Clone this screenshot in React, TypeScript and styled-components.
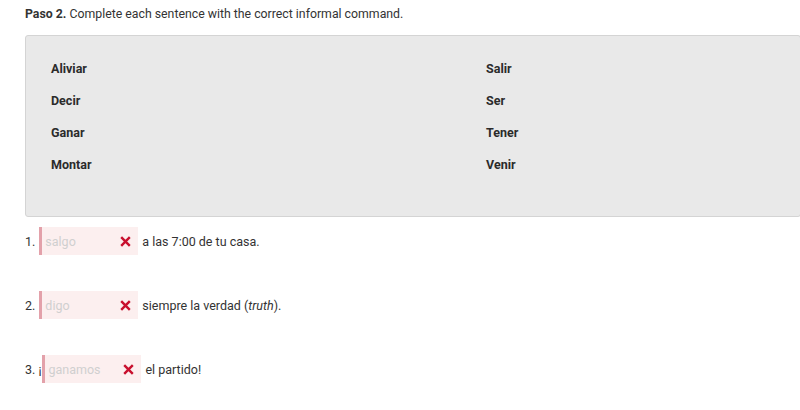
import React from "react";
import styled, { createGlobalStyle } from "styled-components";

const Global = createGlobalStyle`
  html, body { margin: 0; padding: 0; background: #fff; overflow: hidden; }
  body { font-family: Roboto, "Liberation Sans", Arial, sans-serif; color: #333; }
`;

const Page = styled.div`
  padding: 6px 0 0 25px;
  width: 800px;
  box-sizing: border-box;
`;

const Title = styled.p`
  margin: 0;
  font-size: 12.3px;
  line-height: 16px;
  color: #333;
  b { font-weight: 700; }
`;

const WordBank = styled.div`
  margin-top: 13px;
  width: 776px;
  box-sizing: border-box;
  background: #e9e9e9;
  border: 1px solid #d4d4d4;
  border-radius: 3px;
  padding: 25px 0 43px 25px;
  display: grid;
  grid-template-columns: 435px auto;
  row-gap: 16px;
`;

const Word = styled.div`
  font-size: 12.5px;
  line-height: 16px;
  font-weight: 700;
  color: #2b2b2b;
`;

const Items = styled.div`
  margin-top: 10px;
  display: flex;
  flex-direction: column;
  gap: 36px;
`;

const Item = styled.div`
  display: flex;
  align-items: center;
  height: 28px;
  font-size: 12.5px;
  color: #333;
`;

const Num = styled.span<{ $gap: number }>`
  margin-right: ${(p) => p.$gap}px;
`;

const Answer = styled.div`
  display: flex;
  align-items: center;
  width: 99px;
  height: 28px;
  box-sizing: border-box;
  background: #fcefef;
  border-left: 3px solid #e3a1aa;
  padding: 0 6px 0 3px;
  margin-right: 4px;
`;

const Given = styled.span`
  flex: 1;
  color: #d0cfcf;
  font-size: 12.5px;
`;

const Cross = styled.svg`
  width: 11px;
  height: 11px;
  margin-right: 1px;
`;

const XIcon = () => (
  <Cross viewBox="0 0 11 11">
    <path d="M1.2 1.2 L9.8 9.8 M9.8 1.2 L1.2 9.8" stroke="#c8102e" strokeWidth="2.4" strokeLinecap="butt" />
  </Cross>
);

const words = ["Aliviar", "Salir", "Decir", "Ser", "Ganar", "Tener", "Montar", "Venir"];

export default function App() {
  return (
    <Page>
      <Global />
      <Title>
        <b>Paso 2.</b> Complete each sentence with the correct informal command.
      </Title>
      <WordBank>
        {words.map((w) => (
          <Word key={w}>{w}</Word>
        ))}
      </WordBank>
      <Items>
        <Item>
          <Num $gap={4}>1.</Num>
          <Answer>
            <Given>salgo</Given>
            <XIcon />
          </Answer>
          <span>a las 7:00 de tu casa.</span>
        </Item>
        <Item>
          <Num $gap={4}>2.</Num>
          <Answer>
            <Given>digo</Given>
            <XIcon />
          </Answer>
          <span>
            siempre la verdad (<i>truth</i>).
          </span>
        </Item>
        <Item>
          <Num $gap={1}>3. ¡</Num>
          <Answer>
            <Given>ganamos</Given>
            <XIcon />
          </Answer>
          <span>el partido!</span>
        </Item>
      </Items>
    </Page>
  );
}
